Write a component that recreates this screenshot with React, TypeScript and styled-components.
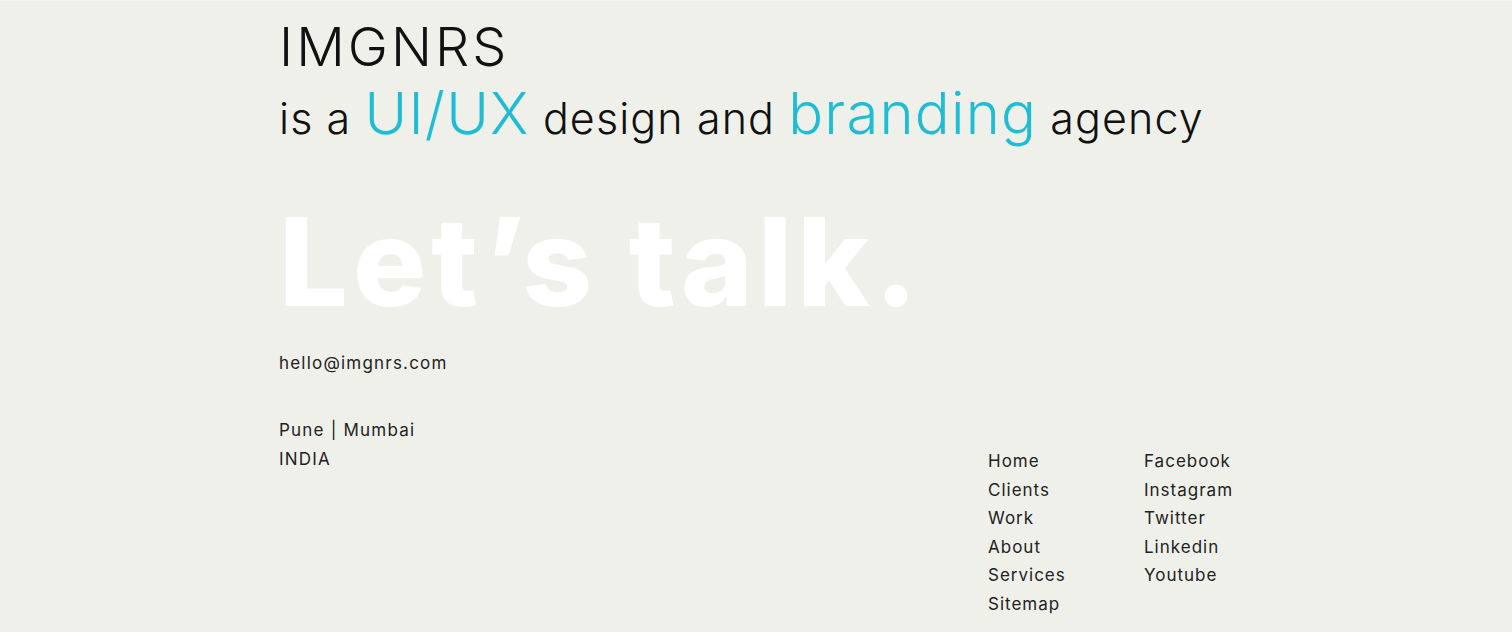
import React from "react";
import styled, { createGlobalStyle } from "styled-components";

const GlobalStyle = createGlobalStyle`
  html, body {
    margin: 0;
    padding: 0;
    background: #f0f0eb;
  }
  body {
    font-family: Inter, "Noto Sans", "DejaVu Sans", sans-serif;
    color: #111;
  }
`;

const Page = styled.div`
  min-height: 632px;
  background: #f0f0eb;
  border-top: 1px solid #f4f4f1;
  box-sizing: border-box;
`;

const Container = styled.main`
  width: 954px;
  margin: 0 auto;
  padding-top: 14px;
`;

const Brand = styled.h1`
  margin: 0;
  font-size: 54px;
  font-weight: 300;
  line-height: 64px;
  letter-spacing: 3px;
  color: #111;
`;

const Tagline = styled.p`
  margin: 0;
  font-size: 43px;
  font-weight: 300;
  line-height: 68px;
  letter-spacing: 1.1px;
  color: #111;
`;

const Highlight = styled.span`
  font-size: 58px;
  letter-spacing: 1.2px;
  color: #1fbdd4;
`;

const Talk = styled.h2`
  margin: 40px 0 0;
  font-size: 122px;
  font-weight: 800;
  line-height: 140px;
  letter-spacing: 5px;
  color: #ffffff;
`;

const Email = styled.a`
  display: block;
  margin-top: 17px;
  font-size: 17px;
  font-weight: 400;
  line-height: 29px;
  letter-spacing: 1.2px;
  color: #222;
  text-decoration: none;
`;

const BottomRow = styled.div`
  display: flex;
  justify-content: space-between;
  align-items: flex-start;
  margin-top: 38px;
`;

const Address = styled.div`
  display: flex;
  flex-direction: column;
`;

const Line = styled.span`
  font-size: 17px;
  line-height: 29px;
  letter-spacing: 1.2px;
  color: #222;
`;

const Nav = styled.nav`
  display: grid;
  grid-template-columns: 156px 89px;
  margin-top: 31px;
`;

const NavColumn = styled.ul`
  list-style: none;
  margin: 0;
  padding: 0;
  display: flex;
  flex-direction: column;
`;

const NavLink = styled.a`
  display: block;
  font-size: 17px;
  line-height: 28.6px;
  letter-spacing: 1px;
  white-space: nowrap;
  color: #222;
  text-decoration: none;
`;

const mainLinks = ["Home", "Clients", "Work", "About", "Services", "Sitemap"];
const socialLinks = ["Facebook", "Instagram", "Twitter", "Linkedin", "Youtube"];

export default function App() {
  return (
    <>
      <GlobalStyle />
      <Page>
        <Container>
          <Brand>IMGNRS</Brand>
          <Tagline>
            is a <Highlight>UI/UX</Highlight> design and <Highlight>branding</Highlight> agency
          </Tagline>
          <Talk>Let’s talk.</Talk>
          <Email href="#">hello@imgnrs.com</Email>
          <BottomRow>
            <Address>
              <Line>Pune | Mumbai</Line>
              <Line>INDIA</Line>
            </Address>
            <Nav>
              <NavColumn>
                {mainLinks.map((l) => (
                  <li key={l}>
                    <NavLink href="#">{l}</NavLink>
                  </li>
                ))}
              </NavColumn>
              <NavColumn>
                {socialLinks.map((l) => (
                  <li key={l}>
                    <NavLink href="#">{l}</NavLink>
                  </li>
                ))}
              </NavColumn>
            </Nav>
          </BottomRow>
        </Container>
      </Page>
    </>
  );
}
